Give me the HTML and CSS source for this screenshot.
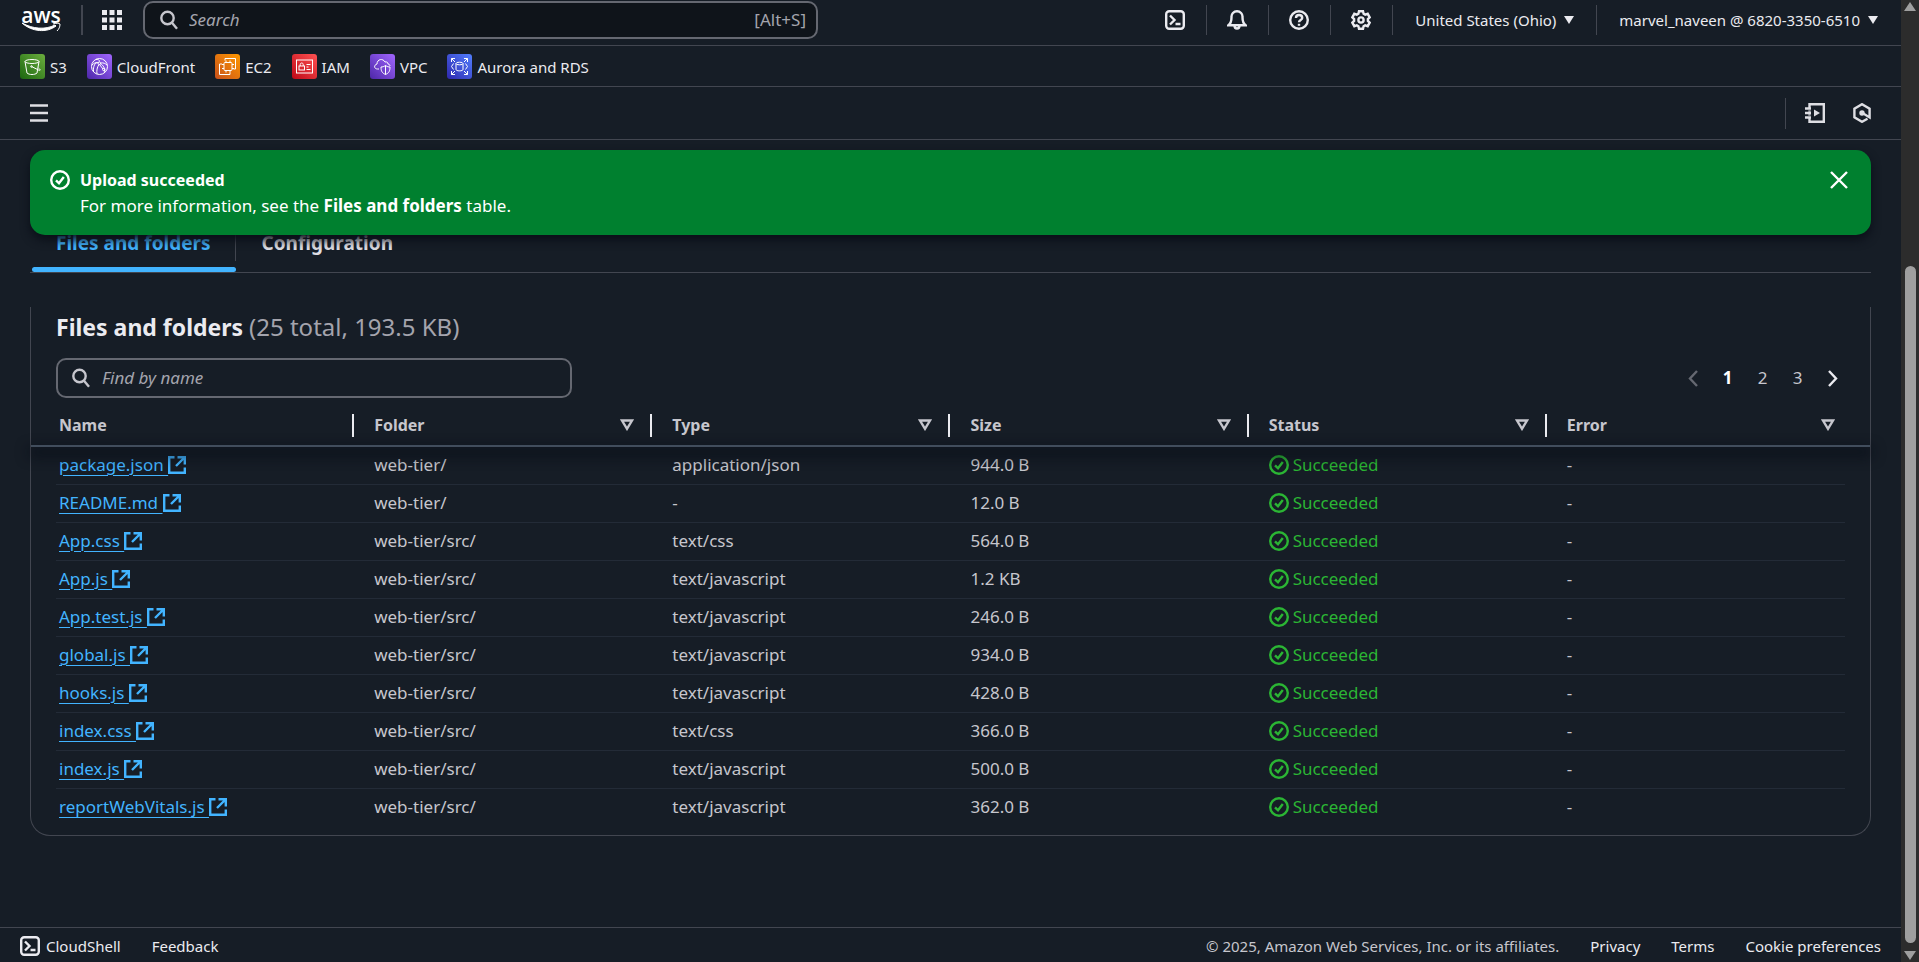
FILE: index.html
```html
<!DOCTYPE html>
<html lang="en">
<head>
<meta charset="utf-8">
<title>Upload status</title>
<link rel="stylesheet" href="styles.css">
</head>
<body>
<svg class="defs" aria-hidden="true">
  <symbol id="i-search" viewBox="0 0 20 20"><circle cx="8.500" cy="8" r="6.200" /><path d="m13 12.800 5 6" /></symbol>
  <symbol id="i-shell" viewBox="0 0 20 20"><rect x="1.2" y="1.2" width="17.6" height="17.6" rx="3" /><path d="m5 5.500 4.500 4.500L5 14.500M10.500 14h5" /></symbol>
  <symbol id="i-check" viewBox="0 0 20 20"><circle cx="10" cy="10" r="8.800" /><path d="m6 10.300 3 3 4.800-6.300" /></symbol>
  <symbol id="i-ext" viewBox="0 0 18 18"><path d="M6.500 1.200H1.200v15.600h15.600v-5.300M9.500 1.200h7.300v7.300M16.500 1.500 8 10" /></symbol>
  <symbol id="i-filter" viewBox="0 0 14 12"><path d="M2 1.500h10L7 9.800z" /></symbol>
</svg>
<div class="app">
  <header>
    <div class="topbar">
      <a class="logo" href="#" aria-label="AWS home">
        <span class="logo-text">aws</span>
        <svg class="smile" viewBox="0 0 40 12"><path d="M1 1c10 9 25 10 34 3l-1-1C24 8 12 7 1 1z" fill="currentColor" /><path d="M32 2c3-1 6-1 7 0 0 3-1 5-3 7" /></svg>
      </a>
      <span class="rule"></span>
      <button class="icon-btn apps" aria-label="Services"><svg class="ic20 solid" viewBox="0 0 20 20"><path d="M0 0h5v5H0zM7.500 0h5v5h-5zM15 0h5v5h-5zM0 7.500h5v5H0zM7.500 7.500h5v5h-5zM15 7.500h5v5h-5zM0 15h5v5H0zM7.500 15h5v5h-5zM15 15h5v5h-5z" /></svg></button>
      <label class="search">
        <svg class="ic20"><use href="#i-search" /></svg>
        <input type="search" placeholder="Search" aria-label="Search">
        <span>[Alt+S]</span>
      </label>
      <nav class="tools">
        <button class="icon-btn" aria-label="CloudShell"><svg class="ic20"><use href="#i-shell" /></svg></button>
        <button class="icon-btn" aria-label="Notifications"><svg class="ic20" viewBox="0 0 20 20"><path d="M1.500 15.200c2.500-2 3-4 3-8A5.500 5.500 0 0 1 10 1.200a5.500 5.500 0 0 1 5.500 6c0 4 .5 6 3 8z" /><path d="M7.500 15.500c0 4 5 4 5 0" /></svg></button>
        <button class="icon-btn" aria-label="Help"><svg class="ic20" viewBox="0 0 20 20"><circle cx="10" cy="10" r="8.800" /><path d="M7 8c0-4 6.200-4 6.200 0C13.200 10 10 10 10 12.200" /><path d="M10 13.800v2" /></svg></button>
        <button class="icon-btn" aria-label="Settings"><svg class="ic20" viewBox="0 0 20 20"><path d="m8 1.200h4l.6 2.500 1.600.9 2.500-.8 2 3.500-1.800 1.800v1.800l1.800 1.800-2 3.500-2.500-.8-1.600.9-.6 2.500H8l-.6-2.500-1.600-.9-2.500.8-2-3.500 1.800-1.800V9.100L1.300 7.300l2-3.500 2.500.8 1.600-.9z" /><circle cx="10" cy="10" r="2.600" /></svg></button>
        <button class="menu">United States (Ohio)<i class="caret"></i></button>
        <button class="menu">marvel_naveen @ 6820-3350-6510<i class="caret"></i></button>
      </nav>
    </div>
    <nav class="favorites">
      <a href="#"><svg class="svc green" viewBox="0 0 25 25"><ellipse cx="12" cy="7.500" rx="7" ry="2" /><path d="M5 7.500 7 19c2 2 8 2 10 0l2-11.500M11.500 12.500l7 3.500c2 .8 2.500 0 0-2" /><circle cx="11.500" cy="12.500" r=".8" /></svg>S3</a>
      <a href="#"><svg class="svc purple" viewBox="0 0 25 25"><circle cx="12.500" cy="12.500" r="8" /><path d="M6.500 18C6 12 8 8 11.500 8.500M9 5.500c2-.5 3.500.500 3.500 2M13 9.500c4 2 5 5 4.500 9.500M12 10.500c-2 3-2.500 6-2 9.500M5 11c2-2 4-3 5.500-2M14 9c2-.5 4.500.5 6 2M12.500 10.500l3.500 4.500" /><circle cx="12.300" cy="9.200" r="1.300" /><circle cx="16.800" cy="15.500" r="1.200" /></svg>CloudFront</a>
      <a href="#"><svg class="svc orange" viewBox="0 0 25 25"><rect x="9" y="8.500" width="8" height="8" rx="1" /><path d="M10 6.500V4.500h10.500V15h-2M7 10H4.500v10.500H15v-2M11 8.500v-2M15 8.500v-2M17 10.500h2M17 14.500h2M11 18.500v-2M15 18.500v-2M7 10.500h2M7 14.500h2" /></svg>EC2</a>
      <a href="#"><svg class="svc red" viewBox="0 0 25 25"><rect x="4.500" y="6" width="16" height="13" /><rect x="7" y="12" width="5.500" height="4" /><path d="M8.200 12v-1.500c0-2 3-2 3 0V12M14.500 10.500h4M14.500 13h2M14.500 15.500h4" /></svg>IAM</a>
      <a href="#"><svg class="svc purple" viewBox="0 0 25 25"><path d="M9 15H7.500C4 15 3.500 11 7 10c0-5 6-6 8-2 2-.5 3 .5 3 2 1.500.3 2 1 2 2" /><path d="M15.500 11.500c1.500 1 3 1.500 4.500 1.500 0 4-1 6-4.500 7.500-3.500-1.500-4.500-3.500-4.500-7.500 1.500 0 3-.5 4.500-1.500zM15.500 11.500v9" /></svg>VPC</a>
      <a href="#"><svg class="svc blue" viewBox="0 0 25 25"><ellipse cx="12.500" cy="9.500" rx="3.500" ry="1.300" /><path d="M9 9.500v6c0 1.800 7 1.800 7 0v-6M4.500 8V4.500H8M4.500 4.500l3.500 3.500M17 4.500h3.500V8M20.500 4.500 17 8M4.500 17v3.500H8M4.500 20.500 8 17M17 20.500h3.500V17M20.500 20.500 17 17M6.500 9.500l-2 3 2 3M18.500 9.500l2 3-2 3" /></svg>Aurora and RDS</a>
    </nav>
    <div class="toolbar">
      <button class="icon-btn" aria-label="Open navigation"><svg class="ic20" viewBox="0 0 20 20"><path d="M1 2.500h18M1 10h18M1 17.500h18" /></svg></button>
      <div class="panels">
        <button class="icon-btn" aria-label="Tutorials"><svg class="ic20" viewBox="0 0 20 20"><path d="M4.500 4.500V1.200h14.300v17.600H4.500v-3.300M4.500 7.500v1M4.500 11.500v1M0 5.500h6M0 10h6M0 14.500h6" /><path d="m9 6.500 6 3.500-6 3.500z" fill="currentColor" stroke="none" /></svg></button>
        <button class="icon-btn" aria-label="Diagnostics"><svg class="ic20" viewBox="0 0 20 20"><path d="m15.500 15.700-5.500 3.100-7.600-4.400V5.600L10 1.200l7.600 4.400v8.800L10.500 10" /><circle cx="10" cy="10" r="1.500" fill="currentColor" /></svg></button>
      </div>
    </div>
  </header>
  <main>
    <div class="flash" role="status">
      <svg class="ic20"><use href="#i-check" /></svg>
      <div class="flash-text"><strong>Upload succeeded</strong><p>For more information, see the <strong>Files and folders</strong> table.</p></div>
      <button class="icon-btn" aria-label="Dismiss"><svg class="ic20" viewBox="0 0 20 20"><path d="m2 2 16 16M18 2 2 18" /></svg></button>
    </div>
    <div class="tabs" role="tablist">
      <button class="tab active" role="tab" aria-selected="true">Files and folders</button>
      <button class="tab" role="tab" aria-selected="false">Configuration</button>
    </div>
    <section class="card">
      <h2>Files and folders <span>(25 total, 193.5 KB)</span></h2>
      <div class="controls">
        <label class="find"><svg class="ic20"><use href="#i-search" /></svg><input type="search" placeholder="Find by name" aria-label="Find by name"></label>
        <nav class="pages" aria-label="Pagination">
          <button disabled aria-label="Previous page"><svg viewBox="0 0 10 17"><path d="M9 1 2 8.500 9 16" /></svg></button>
          <button class="current">1</button>
          <button>2</button>
          <button>3</button>
          <button class="next" aria-label="Next page"><svg viewBox="0 0 10 17"><path d="m1 1 7 7.500L1 16" /></svg></button>
        </nav>
      </div>
      <table>
        <thead>
          <tr>
            <th><div>Name</div></th>
            <th><div>Folder<button aria-label="Sort by folder"><svg><use href="#i-filter" /></svg></button></div></th>
            <th><div>Type<button aria-label="Sort by type"><svg><use href="#i-filter" /></svg></button></div></th>
            <th><div>Size<button aria-label="Sort by size"><svg><use href="#i-filter" /></svg></button></div></th>
            <th><div>Status<button aria-label="Sort by status"><svg><use href="#i-filter" /></svg></button></div></th>
            <th><div>Error<button aria-label="Sort by error"><svg><use href="#i-filter" /></svg></button></div></th>
          </tr>
        </thead>
        <tbody>
          <tr><td><a href="#">package.json <svg><use href="#i-ext" /></svg></a></td><td>web-tier/</td><td>application/json</td><td>944.0 B</td><td><span class="ok"><svg class="ic20"><use href="#i-check" /></svg>Succeeded</span></td><td>-</td></tr>
          <tr><td><a href="#">README.md <svg><use href="#i-ext" /></svg></a></td><td>web-tier/</td><td>-</td><td>12.0 B</td><td><span class="ok"><svg class="ic20"><use href="#i-check" /></svg>Succeeded</span></td><td>-</td></tr>
          <tr><td><a href="#">App.css <svg><use href="#i-ext" /></svg></a></td><td>web-tier/src/</td><td>text/css</td><td>564.0 B</td><td><span class="ok"><svg class="ic20"><use href="#i-check" /></svg>Succeeded</span></td><td>-</td></tr>
          <tr><td><a href="#">App.js <svg><use href="#i-ext" /></svg></a></td><td>web-tier/src/</td><td>text/javascript</td><td>1.2 KB</td><td><span class="ok"><svg class="ic20"><use href="#i-check" /></svg>Succeeded</span></td><td>-</td></tr>
          <tr><td><a href="#">App.test.js <svg><use href="#i-ext" /></svg></a></td><td>web-tier/src/</td><td>text/javascript</td><td>246.0 B</td><td><span class="ok"><svg class="ic20"><use href="#i-check" /></svg>Succeeded</span></td><td>-</td></tr>
          <tr><td><a href="#">global.js <svg><use href="#i-ext" /></svg></a></td><td>web-tier/src/</td><td>text/javascript</td><td>934.0 B</td><td><span class="ok"><svg class="ic20"><use href="#i-check" /></svg>Succeeded</span></td><td>-</td></tr>
          <tr><td><a href="#">hooks.js <svg><use href="#i-ext" /></svg></a></td><td>web-tier/src/</td><td>text/javascript</td><td>428.0 B</td><td><span class="ok"><svg class="ic20"><use href="#i-check" /></svg>Succeeded</span></td><td>-</td></tr>
          <tr><td><a href="#">index.css <svg><use href="#i-ext" /></svg></a></td><td>web-tier/src/</td><td>text/css</td><td>366.0 B</td><td><span class="ok"><svg class="ic20"><use href="#i-check" /></svg>Succeeded</span></td><td>-</td></tr>
          <tr><td><a href="#">index.js <svg><use href="#i-ext" /></svg></a></td><td>web-tier/src/</td><td>text/javascript</td><td>500.0 B</td><td><span class="ok"><svg class="ic20"><use href="#i-check" /></svg>Succeeded</span></td><td>-</td></tr>
          <tr><td><a href="#">reportWebVitals.js <svg><use href="#i-ext" /></svg></a></td><td>web-tier/src/</td><td>text/javascript</td><td>362.0 B</td><td><span class="ok"><svg class="ic20"><use href="#i-check" /></svg>Succeeded</span></td><td>-</td></tr>
        </tbody>
      </table>
    </section>
  </main>
  <footer>
    <button class="shell"><svg class="ic20"><use href="#i-shell" /></svg>CloudShell</button>
    <a href="#">Feedback</a>
    <span class="legal">© 2025, Amazon Web Services, Inc. or its affiliates.</span>
    <a href="#">Privacy</a>
    <a href="#">Terms</a>
    <a href="#">Cookie preferences</a>
  </footer>
</div>
<div class="scrollbar" aria-hidden="true"><i class="up"></i><i class="thumb"></i><i class="down"></i></div>
</body>
</html>
```
FILE: styles.css
```css
* { box-sizing: border-box; }

body {
  margin: 0;
  height: 100vh;
  display: flex;
  overflow: hidden;
  background: #161d26;
  color: #c6c6cd;
  font: 17px/24px "Noto Sans", "Open Sans", sans-serif;
}

button, input { font: inherit; color: inherit; background: none; border: 0; padding: 0; margin: 0; outline: 0; }
button { cursor: pointer; }
a { color: inherit; text-decoration: none; }
p, h2 { margin: 0; }
svg { display: block; flex: none; fill: none; stroke: currentColor; stroke-width: 2.4; }
.defs { display: none; }
.solid { fill: currentColor; stroke: none; }
.ic20 { width: 20px; height: 20px; }
.icon-btn { display: flex; }

.app { flex: 1; min-width: 0; display: flex; flex-direction: column; }

/* Top navigation */
.topbar { display: flex; align-items: center; height: 46px; padding: 0 23px 6px 21px; border-bottom: 1px solid #424650; color: #ebebf0; }
.logo { display: flex; flex-direction: column; align-items: center; width: 40px; height: 24px; color: #fff; }
.logo-text { font: 600 21px/14px "Open Sans", sans-serif; }
.smile { width: 40px; height: 12px; stroke-width: 1; }
.rule { width: 2px; height: 30px; background: #424650; margin: 0 19px 0 20px; }
.apps { margin-right: 21px; }
.search { display: flex; align-items: center; gap: 10px; width: 675px; height: 38px; padding: 0 10px 0 14px; border: 2px solid #656871; border-radius: 10px; background: #0f141a; color: #a4a4ad; }
.search svg, .find svg { color: #c6c6cd; }
.search input { flex: 1; min-width: 0; }
input::placeholder { font-style: italic; color: #a4a4ad; opacity: 1; }
.tools { margin-left: auto; display: flex; align-items: center; font-size: 15px; }
.tools > * { padding: 0 21px 0 20px; height: 30px; align-items: center; border-left: 1px solid #424650; }
.tools > :first-child { border-left: 0; }
.tools > .menu { display: flex; gap: 8px; padding: 0 22px; }
.tools > :last-child { padding-right: 0; }
.caret { border: 5px solid transparent; border-top: 8px solid currentColor; border-bottom: 0; }

.favorites { display: flex; align-items: center; gap: 20px; height: 41px; padding: 1px 0 0 20px; border-bottom: 1px solid #424650; color: #ebebf0; font-size: 15px; }
.favorites a { display: flex; align-items: center; gap: 5px; }
.svc { width: 25px; height: 25px; border-radius: 3px; color: #fff; stroke-width: 1; }
.green { background: linear-gradient(45deg, #1b660f, #6cae3e); }
.purple { background: linear-gradient(45deg, #4d27a8, #a166ff); }
.orange { background: linear-gradient(45deg, #c8511b, #f90); }
.red { background: linear-gradient(45deg, #bd0816, #ff5252); }
.blue { background: linear-gradient(45deg, #2e27ad, #527fff); }

.toolbar { display: flex; align-items: center; justify-content: space-between; height: 53px; padding: 0 29px; border-bottom: 1px solid #424650; color: #dedee3; }
.panels { display: flex; align-items: center; gap: 27px; height: 31px; padding-left: 19px; border-left: 1px solid #424650; }

/* Main content */
main { flex: 1; position: relative; padding: 85px 30px 0; }
.flash { position: absolute; z-index: 2; top: 10px; left: 30px; right: 30px; display: flex; gap: 10px; min-height: 85px; padding: 17px 22px 17px 20px; border-radius: 15px; background: #00802f; color: #fff; box-shadow: 0 5px 10px #0a0f18; }
.flash > .ic20, .flash .icon-btn { margin-top: 3px; }
.flash .icon-btn { stroke-width: 2; }
.flash-text { flex: 1; line-height: 25px; }
.flash-text > strong { font-size: 16px; }

.tabs { display: flex; border-bottom: 1px solid #424650; font-size: 19px; font-weight: 700; }
.tab { height: 47px; padding: 0 25px 12px 26px; color: #dedee3; }
.tab.active { position: relative; color: #42b4ff; }
.tab.active::before { content: ""; position: absolute; right: 0; top: 0; height: 36px; border-right: 1px solid #424650; }
.tab.active::after { content: ""; position: absolute; left: 2px; right: 0; bottom: 0; height: 5px; border-radius: 3px; background: #42b4ff; }

.card { margin-top: 34px; padding: 3px 25px 8px; border: 1px solid #424650; border-top: 0; border-radius: 0 0 20px 20px; }
h2 { font-size: 23px; line-height: 34px; color: #ebebf0; }
h2 span { font-size: 24px; font-weight: 400; color: #a4a4ad; }
.controls { display: flex; align-items: center; justify-content: space-between; margin-top: 14px; }
.find { display: flex; align-items: center; gap: 11px; width: 516px; height: 40px; padding: 0 13px; border: 2px solid #656871; border-radius: 10px; }
.find input { flex: 1; min-width: 0; }
.pages { display: flex; margin-right: -5px; }
.pages button { width: 35px; display: flex; align-items: center; justify-content: center; }
.pages svg { width: 10px; height: 17px; }
.pages :disabled { color: #656871; }
.current { font-weight: 700; color: #fff; }
.next { color: #ebebf0; }

table { width: 100%; margin-top: 7px; border-spacing: 0; table-layout: fixed; }
thead { position: relative; }
thead::after { content: ""; position: absolute; left: -25px; right: -25px; bottom: 0; height: 2px; background: #414d5c; box-shadow: 0 6px 14px 2px #060a14; }
th { height: 42px; padding: 0 0 2px; text-align: left; font-size: 16px; }
th div { display: flex; align-items: center; justify-content: space-between; height: 23px; margin-left: -2px; padding: 0 18px 0 20px; border-left: 2px solid #ebebf0; }
th:first-child div { border-left: 0; padding-left: 5px; }
th:last-child div { padding-right: 10px; }
th svg { width: 14px; height: 12px; }
td { height: 38px; padding: 0 0 2px 20px; border-bottom: 1px solid #232b37; }
td:first-child { padding-left: 3px; }
tbody tr:last-child td { border-bottom: 0; }
td a { color: #42b4ff; text-decoration: underline; text-underline-offset: 4px; text-decoration-thickness: 1px; }
td a svg { display: inline-block; width: 18px; height: 18px; vertical-align: -3px; }
.ok { display: flex; align-items: center; gap: 4px; color: #2bb534; }

footer { display: flex; align-items: center; gap: 31px; height: 35px; padding: 1px 20px 0; border-top: 1px solid #424650; color: #ebebf0; font-size: 15px; }
.shell { display: flex; align-items: center; gap: 6px; }
.legal { margin-left: auto; color: #c6c6cd; }

/* Scroll track */
.scrollbar { width: 18px; display: flex; flex-direction: column; align-items: center; background: #2c2c2c; padding: 2px 0; }
.up, .down { border: 6px solid transparent; }
.up { border-top: 0; border-bottom: 9px solid #9f9f9f; }
.down { border-bottom: 0; border-top: 9px solid #9f9f9f; margin-top: 8px; }
.thumb { flex: 1; width: 11px; margin-top: 255px; border-radius: 6px; background: #9f9f9f; }
```
